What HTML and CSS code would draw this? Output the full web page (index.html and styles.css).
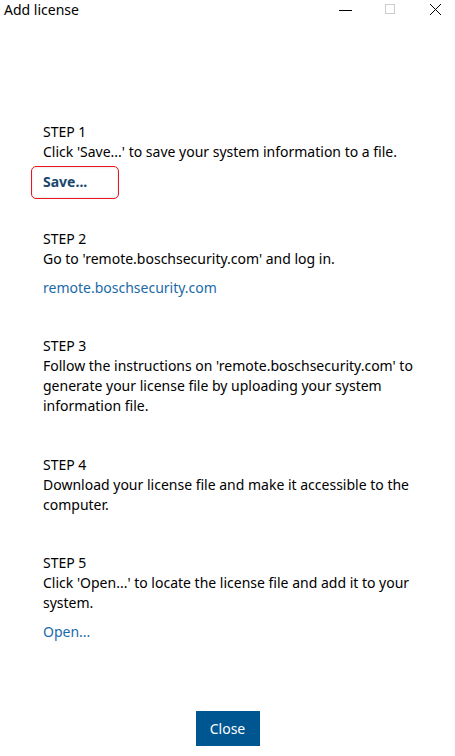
FILE: index.html
```html
<!DOCTYPE html>
<html>

<head>
    <meta charset="UTF-8" />
    <meta name="viewport" content="width=device-width, initial-scale=1" />
    <link rel="stylesheet" href="styles.css">
</head>

<body>
    <section class="dialog">
        <header class="titlebar">
            <span class="title">Add license</span>
            <div class="controls">
                <span class="ctl min"><svg width="14" height="14" viewBox="0 0 14 14"><path d="M0 7.5h13" stroke="#000" stroke-width="1"/></svg></span>
                <span class="ctl max"><svg width="14" height="14" viewBox="0 0 14 14"><rect x="1.5" y="1.5" width="9" height="9" fill="none" stroke="#ccc" stroke-width="1"/></svg></span>
                <span class="ctl close"><svg width="14" height="14" viewBox="0 0 14 14"><path d="M1 1L12 12M12 1L1 12" stroke="#000" stroke-width="1"/></svg></span>
            </div>
        </header>
        <div class="steps">
            <div class="step">
                <div>STEP 1</div>
                <div>Click 'Save...' to save your system information to a file.</div>
                <div class="save-wrap"><a class="save">Save...</a></div>
            </div>
            <div class="step">
                <div>STEP 2</div>
                <div>Go to 'remote.boschsecurity.com' and log in.</div>
                <a class="link">remote.boschsecurity.com</a>
            </div>
            <div class="step">
                <div>STEP 3</div>
                <div>Follow the instructions on 'remote.boschsecurity.com' to generate your license file by uploading your system information file.</div>
            </div>
            <div class="step">
                <div>STEP 4</div>
                <div>Download your license file and make it accessible to the computer.</div>
            </div>
            <div class="step">
                <div>STEP 5</div>
                <div>Click 'Open...' to locate the license file and add it to your system.</div>
                <a class="link">Open...</a>
            </div>
        </div>
        <footer>
            <button class="close-btn">Close</button>
        </footer>
    </section>
</body>

</html>
```

FILE: styles.css
```css
body {
    margin: 0;
    padding: 0;
    background: #fff;
    font-family: "Noto Sans", "Open Sans", sans-serif;
    color: #000;
}

.dialog {
    width: 455px;
    height: 756px;
    display: flex;
    flex-direction: column;
}

.titlebar {
    height: 20px;
    display: flex;
    justify-content: space-between;
    align-items: center;
}

.title {
    padding-left: 4px;
    font-size: 14px;
    line-height: 20px;
}

.controls {
    display: flex;
    gap: 31px;
    padding-right: 12px;
}

.ctl svg {
    display: block;
}

.steps {
    padding: 102px 0 0 43px;
    font-size: 14px;
    line-height: 20px;
    width: 380px;
    flex: 1;
}

.step {
    margin-bottom: 38.5px;
}

.save-wrap {
    display: flex;
    margin: 4px 0 -9px -12px;
}

.save {
    display: block;
    box-sizing: border-box;
    font-weight: bold;
    color: #18476d;
    width: 88px;
    height: 33px;
    line-height: 30px;
    padding-left: 11px;
    border: 1.5px solid #e8141e;
    border-radius: 5px;
    box-shadow: inset 0 0 3px rgba(0, 0, 0, 0.15);
}

.link {
    display: block;
    margin-top: 9px;
    color: #1b6aa8;
}

footer {
    display: flex;
    justify-content: center;
    padding-bottom: 10px;
}

.close-btn {
    width: 64px;
    height: 35px;
    border: none;
    background: #005691;
    color: #fff;
    font-family: "Noto Sans", "Open Sans", sans-serif;
    font-size: 14px;
}
```
